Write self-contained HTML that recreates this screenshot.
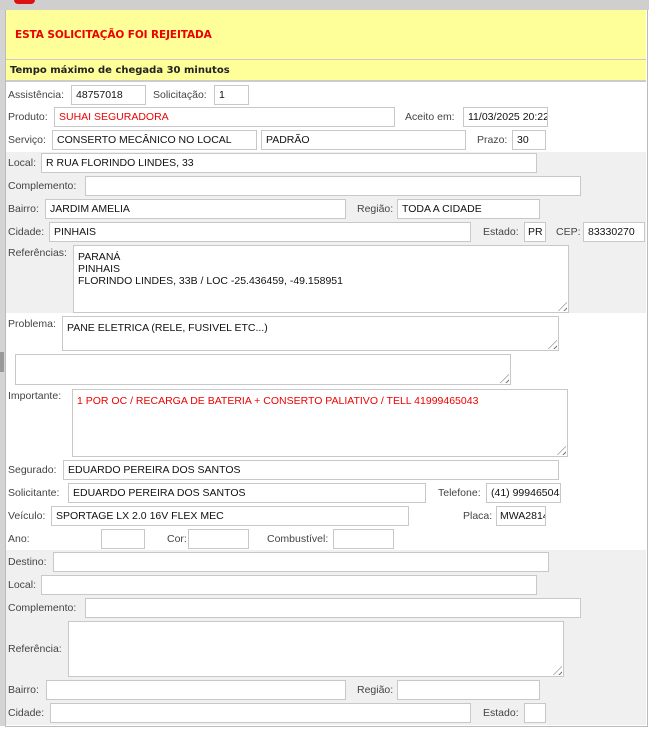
<!DOCTYPE html>
<html><head><meta charset="utf-8"><style>
*{margin:0;padding:0;box-sizing:border-box}
body{width:649px;height:735px;background:#fff;position:relative;overflow:hidden;font-family:"Liberation Sans",sans-serif}
.a{position:absolute}
.l{position:absolute;font-size:10.5px;color:#444;line-height:13px;white-space:nowrap}
.i{position:absolute;background:#fff;border:1px solid #c8c8c8;font-size:10.5px;color:#111;padding:0 0 0 4px;line-height:19px;white-space:nowrap;overflow:hidden}
.t{line-height:12px;padding-top:5px}
.g{background:#f0f0f0}
.rz{position:absolute;right:1px;bottom:1px;width:9px;height:9px;background:repeating-linear-gradient(135deg,transparent 0 2px,#777 2px 3px,transparent 3px 4px);clip-path:polygon(100% 0,100% 100%,0 100%)}
</style></head><body>
<div class="a" style="left:0;top:0;width:649px;height:10px;background:#cfcfcf"></div>
<div class="a" style="left:14px;top:-4px;width:21px;height:8px;background:#d11;border-radius:5px"></div>
<div class="a" style="left:0;top:10px;width:5px;height:716px;background:#d4d4d4"></div>
<div class="a" style="left:0;top:352px;width:4px;height:20px;background:#999"></div>
<div class="a" style="left:5px;top:10px;width:643px;height:717px;border:1px solid #bbb;border-top:none;background:#fff"></div>
<div class="a" style="left:6px;top:10px;width:640px;height:50px;background:#ffff99;border-bottom:1px solid #ccc"></div>
<div class="a" style="left:15px;top:29px;font:bold 10.5px 'DejaVu Sans',sans-serif;color:#e00;letter-spacing:-0.1px">ESTA SOLICITAÇÃO FOI REJEITADA</div>
<div class="a" style="left:6px;top:60px;width:640px;height:22px;background:#ffff99;border-bottom:2px solid #ccc"></div>
<div class="a" style="left:10px;top:65px;font:bold 10px 'DejaVu Sans',sans-serif;color:#222">Tempo máximo de chegada 30 minutos</div>
<div class="a g" style="left:6px;top:152px;width:640px;height:161px"></div>
<div class="a g" style="left:6px;top:550px;width:640px;height:175px"></div>

<div class="l" style="left:8px;top:89px">Assistência:</div><div class="i" style="left:71px;top:85px;width:75px;height:20px">48757018</div>
<div class="l" style="left:153px;top:89px">Solicitação:</div><div class="i" style="left:214px;top:85px;width:35px;height:20px">1</div>
<div class="l" style="left:8px;top:111px">Produto:</div><div class="i" style="left:54px;top:107px;width:341px;height:20px;color:#e00">SUHAI SEGURADORA</div>
<div class="l" style="left:405px;top:111px">Aceito em:</div><div class="i" style="left:463px;top:107px;width:85px;height:20px">11/03/2025 20:22</div>
<div class="l" style="left:8px;top:134px">Serviço:</div><div class="i" style="left:52px;top:130px;width:205px;height:20px">CONSERTO MECÂNICO NO LOCAL</div>
<div class="i" style="left:261px;top:130px;width:205px;height:20px">PADRÃO</div>
<div class="l" style="left:477px;top:134px">Prazo:</div><div class="i" style="left:512px;top:130px;width:34px;height:20px">30</div>

<div class="l" style="left:8px;top:157px">Local:</div><div class="i" style="left:41px;top:153px;width:496px;height:20px">R RUA FLORINDO LINDES, 33</div>
<div class="l" style="left:8px;top:180px">Complemento:</div><div class="i" style="left:85px;top:176px;width:496px;height:20px"></div>
<div class="l" style="left:8px;top:203px">Bairro:</div><div class="i" style="left:45px;top:199px;width:301px;height:20px">JARDIM AMELIA</div>
<div class="l" style="left:357px;top:203px">Região:</div><div class="i" style="left:397px;top:199px;width:143px;height:20px">TODA A CIDADE</div>
<div class="l" style="left:8px;top:226px">Cidade:</div><div class="i" style="left:49px;top:222px;width:422px;height:20px">PINHAIS</div>
<div class="l" style="left:483px;top:226px">Estado:</div><div class="i" style="left:524px;top:222px;width:22px;height:20px;padding-left:3px">PR</div>
<div class="l" style="left:556px;top:226px">CEP:</div><div class="i" style="left:583px;top:222px;width:62px;height:20px">83330270</div>
<div class="l" style="left:8px;top:247px">Referências:</div><div class="i t" style="left:73px;top:245px;width:496px;height:68px">PARANÁ<br>PINHAIS<br>FLORINDO LINDES, 33B / LOC -25.436459, -49.158951<div class="rz"></div></div>

<div class="l" style="left:8px;top:318px">Problema:</div><div class="i t" style="left:62px;top:316px;width:497px;height:35px">PANE ELETRICA (RELE, FUSIVEL ETC...)<div class="rz"></div></div>
<div class="i" style="left:15px;top:354px;width:496px;height:31px"><div class="rz"></div></div>
<div class="l" style="left:8px;top:390px">Importante:</div><div class="i t" style="left:72px;top:389px;width:496px;height:68px;color:#e00">1 POR OC / RECARGA DE BATERIA + CONSERTO PALIATIVO / TELL 41999465043<div class="rz"></div></div>
<div class="l" style="left:8px;top:464px">Segurado:</div><div class="i" style="left:63px;top:460px;width:496px;height:20px">EDUARDO PEREIRA DOS SANTOS</div>
<div class="l" style="left:8px;top:487px">Solicitante:</div><div class="i" style="left:68px;top:483px;width:358px;height:20px">EDUARDO PEREIRA DOS SANTOS</div>
<div class="l" style="left:438px;top:487px">Telefone:</div><div class="i" style="left:486px;top:483px;width:75px;height:20px">(41) 999465043</div>
<div class="l" style="left:8px;top:510px">Veículo:</div><div class="i" style="left:51px;top:506px;width:358px;height:20px">SPORTAGE LX 2.0 16V FLEX MEC</div>
<div class="l" style="left:463px;top:510px">Placa:</div><div class="i" style="left:496px;top:506px;width:50px;height:20px;padding-left:3px">MWA2814</div>
<div class="l" style="left:8px;top:533px">Ano:</div><div class="i" style="left:101px;top:529px;width:44px;height:20px"></div>
<div class="l" style="left:167px;top:533px">Cor:</div><div class="i" style="left:188px;top:529px;width:61px;height:20px"></div>
<div class="l" style="left:267px;top:533px">Combustível:</div><div class="i" style="left:333px;top:529px;width:61px;height:20px"></div>

<div class="l" style="left:8px;top:556px">Destino:</div><div class="i" style="left:53px;top:552px;width:496px;height:20px"></div>
<div class="l" style="left:8px;top:579px">Local:</div><div class="i" style="left:41px;top:575px;width:496px;height:20px"></div>
<div class="l" style="left:8px;top:602px">Complemento:</div><div class="i" style="left:85px;top:598px;width:496px;height:20px"></div>
<div class="l" style="left:8px;top:643px">Referência:</div><div class="i" style="left:68px;top:621px;width:496px;height:56px"><div class="rz"></div></div>
<div class="l" style="left:8px;top:684px">Bairro:</div><div class="i" style="left:46px;top:680px;width:300px;height:20px"></div>
<div class="l" style="left:357px;top:684px">Região:</div><div class="i" style="left:397px;top:680px;width:143px;height:20px"></div>
<div class="l" style="left:8px;top:707px">Cidade:</div><div class="i" style="left:50px;top:703px;width:421px;height:20px"></div>
<div class="l" style="left:483px;top:707px">Estado:</div><div class="i" style="left:524px;top:703px;width:22px;height:20px"></div>
</body></html>
